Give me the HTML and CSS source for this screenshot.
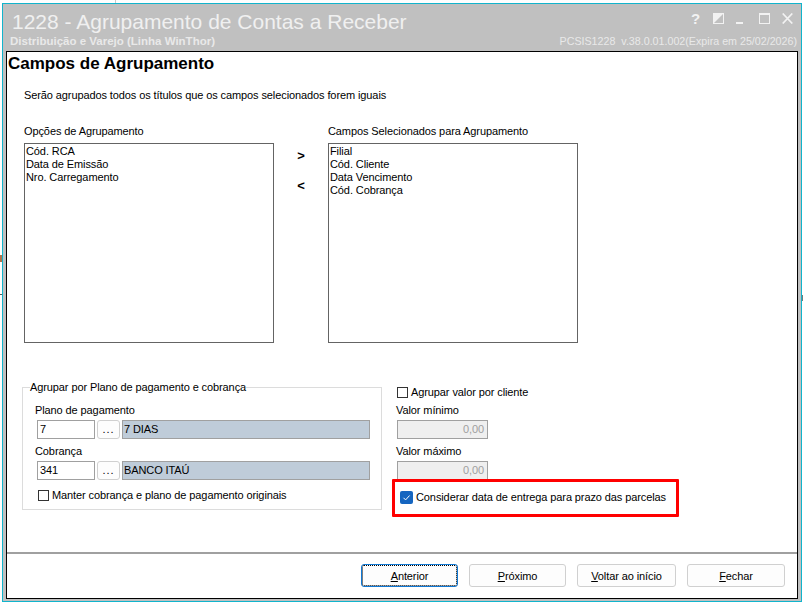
FILE: index.html
```html
<!DOCTYPE html>
<html lang="pt-BR">
<head>
<meta charset="utf-8">
<title>1228 - Agrupamento de Contas a Receber</title>
<link rel="stylesheet" href="styles.css">
</head>
<body>
<i class="speck speck-a"></i><i class="speck speck-b"></i><i class="speck speck-c"></i><i class="speck speck-d"></i>
<div class="window">
  <header class="titlebar">
    <div class="title-row">
      <div class="title">1228 - Agrupamento de Contas a Receber</div>
      <div class="win-icons">
        <span class="help">?</span>
        <svg class="ico ico-contrast" width="11" height="11" viewBox="0 0 11 11"><rect x="0.5" y="0.5" width="10" height="10" fill="none" stroke="#f2f2f2"/><path d="M1 10V1h9z" fill="#f2f2f2"/></svg>
        <svg class="ico ico-min" width="7" height="11" viewBox="0 0 7 11"><rect x="0" y="9" width="7" height="2" fill="#f2f2f2"/></svg>
        <svg class="ico ico-max" width="11" height="11" viewBox="0 0 11 11"><rect x="0.5" y="0.5" width="10" height="10" fill="none" stroke="#f2f2f2"/><rect x="0" y="0" width="11" height="2" fill="#f2f2f2"/></svg>
        <svg class="ico" width="11" height="11" viewBox="0 0 11 11"><path d="M0.7 0.5l9.6 10M10.3 0.5L0.7 10.5" stroke="#f2f2f2" stroke-width="1.7" fill="none"/></svg>
      </div>
    </div>
    <div class="sub-row">
      <span class="sub-left">Distribuição e Varejo (Linha WinThor)</span>
      <span class="sub-right">PCSIS1228&nbsp; v.38.0.01.002(Expira em 25/02/2026)</span>
    </div>
  </header>
  <main class="panel">
    <section class="body">
      <h1 class="heading">Campos de Agrupamento</h1>
      <p class="intro">Serão agrupados todos os títulos que os campos selecionados forem iguais</p>
      <div class="lists">
        <div class="list-col">
          <label class="lbl">Opções de Agrupamento</label>
          <ul class="listbox"><li>Cód. RCA</li><li>Data de Emissão</li><li>Nro. Carregamento</li></ul>
        </div>
        <div class="arrows"><span>&gt;</span><span>&lt;</span></div>
        <div class="list-col">
          <label class="lbl">Campos Selecionados para Agrupamento</label>
          <ul class="listbox"><li>Filial</li><li>Cód. Cliente</li><li>Data Vencimento</li><li>Cód. Cobrança</li></ul>
        </div>
      </div>
      <div class="lower">
        <fieldset class="group">
          <legend>Agrupar por Plano de pagamento e cobrança</legend>
          <div class="lbl field-lbl">Plano de pagamento</div>
          <div class="lookup"><span class="input code">7</span><span class="dots">...</span><span class="input desc">7 DIAS</span></div>
          <div class="lbl field-lbl">Cobrança</div>
          <div class="lookup"><span class="input code">341</span><span class="dots">...</span><span class="input desc">BANCO ITAÚ</span></div>
          <div class="check group-check"><span class="box"></span><span>Manter cobrança e plano de pagamento originais</span></div>
        </fieldset>
        <div class="values">
          <div class="check top-check"><span class="box"></span><span>Agrupar valor por cliente</span></div>
          <div class="lbl field-lbl val-first">Valor mínimo</div>
          <div class="input num">0,00</div>
          <div class="lbl field-lbl">Valor máximo</div>
          <div class="input num">0,00</div>
          <div class="check delivery">
            <span class="box on"><svg width="13" height="13" viewBox="0 0 13 13"><path d="M3.5 6.8l2.1 2.1 4-4.4" fill="none" stroke="#fff" stroke-width="1"/></svg></span>
            <span>Considerar data de entrega para prazo das parcelas</span>
          </div>
          <div class="highlight"></div>
        </div>
      </div>
    </section>
    <footer class="footer">
      <button class="btn active"><u>A</u>nterior</button>
      <button class="btn"><u>P</u>róximo</button>
      <button class="btn w99"><u>V</u>oltar ao início</button>
      <button class="btn w98"><u>F</u>echar</button>
    </footer>
  </main>
</div>
</body>
</html>
```
FILE: styles.css
```css
* { box-sizing: border-box; }
html, body { margin: 0; padding: 0; height: 100%; background: #fff; overflow: hidden; }
body { padding: 3px 1px 2px 2px; font-family: "Liberation Sans", sans-serif; font-size: 11px; letter-spacing: -0.1px; color: #000; }

.speck { position: absolute; display: block; }
.speck-a { left: 115px; top: 0; width: 1px; height: 3px; background: #c8c8c8; }
.speck-b { left: 0; top: 255px; width: 2px; height: 7px; background: #b0714a; }
.speck-c { left: 0; top: 294px; width: 2px; height: 1px; background: #555; }
.speck-d { left: 802px; top: 295px; width: 1px; height: 6px; background: #777; }

.window { height: 100%; display: flex; flex-direction: column; background: #c0c0c0; border: 1px solid #11b4cc; padding: 0 3px 2px 3px; }

.titlebar { height: 47px; flex: none; color: #f2f2f2; letter-spacing: 0; }
.title-row { display: flex; justify-content: space-between; height: 30px; padding-top: 6px; }
.title { font: 21px/24px "Liberation Sans", sans-serif; padding-left: 6px; color: #f0f0f0; white-space: nowrap; }
.win-icons { display: flex; align-items: flex-start; padding: 3px 5px 0 0; }
.help { font: bold 15px/11px "Liberation Sans", sans-serif; width: 22px; }
.ico { display: block; }
.ico-contrast { margin-right: 12px; }
.ico-min { margin-right: 16px; }
.ico-max { margin-right: 12px; }
.sub-row { display: flex; justify-content: space-between; font-size: 11px; line-height: 13px; margin-top: 1px; padding-left: 4px; padding-right: 1px; }
.sub-left { font-weight: bold; font-size: 11.5px; color: #e9e9e9; }
.sub-right { color: #e9e9e9; font-size: 10.7px; }

.panel { flex: 1; display: flex; flex-direction: column; background: #fff; border: 1px solid #000; min-height: 0; }
.body { flex: 1; padding-left: 1px; }
.heading { margin: 0; font: bold 17px/20px "Liberation Sans", sans-serif; letter-spacing: 0; padding-top: 2px; height: 22px; }
.intro { margin: 15px 0 0 16px; line-height: 13px; }
.lbl { line-height: 13px; display: block; }

.lists { display: flex; margin: 23px 0 0 16px; }
.list-col { width: 250px; }
.list-col .lbl { margin-bottom: 5px; }
.listbox { list-style: none; margin: 0; padding: 1px 0 0 1px; height: 200px; border: 1px solid #646464; line-height: 13px; }
.arrows { width: 54px; display: flex; flex-direction: column; align-items: center; padding-top: 23px; gap: 15px; font: bold 13px/15px "Liberation Sans", sans-serif; }

.lower { display: flex; margin-top: 38px; margin-left: 14px; position: relative; }
.group { margin: 0; width: 360px; height: 129px; border: 1px solid #dcdcdc; padding: 0 0 0 12px; position: relative; }
.group legend { padding: 0; margin-left: -5px; line-height: 13px; }
.field-lbl { margin: 6px 0 3px; }
.group .field-lbl:first-of-type { margin-top: 10px; }
.lookup { display: flex; gap: 2px; padding-left: 2px; height: 19px; }
.input { display: block; border: 1px solid #a0a0a0; line-height: 17px; padding: 0 2px; height: 19px; }
.code { width: 58px; background: #fff; }
.desc { width: 248px; background: #bfccd9; padding-left: 1px; }
.dots { width: 23px; height: 19px; border: 1px solid #d0d0d0; border-radius: 3px; text-align: center; line-height: 17px; letter-spacing: 1px; background: #fdfdfd; }
.check { display: flex; align-items: center; gap: 3px; line-height: 13px; white-space: nowrap; }
.group-check { margin: 9px 0 0 3px; }
.box { width: 11px; height: 11px; border: 1px solid #333; flex: none; background: #fff; }

.values { margin-left: 15px; width: 300px; position: relative; }
.top-check { margin-top: 5px; }
.values .field-lbl { margin-left: -1px; }
.values .val-first { margin-top: 5px; }
.num { width: 91px; background: #efefef; color: #a0a0a0; text-align: right; padding-right: 3px; }
.delivery { margin: 11px 0 0 3px; }
.box.on { width: 13px; height: 13px; border: 0; border-radius: 2px; background: #1565c0; display: block; }
.box.on svg { display: block; }
.highlight { position: absolute; left: -5px; top: 98px; width: 287px; height: 38px; border: 3px solid #f00; border-radius: 1px; }

.footer { height: 46px; flex: none; border-top: 2px solid #a0a0a0; display: flex; gap: 11px; padding: 10px 0 0 354px; }
.btn { width: 97px; height: 23px; padding: 0; border: 1px solid #d0d0d0; border-radius: 3px; background: #fdfdfd; font: inherit; letter-spacing: inherit; color: #000; }
.w99 { width: 99px; }
.w98 { width: 98px; }
.btn.active { border-color: #0f78d4; outline: 1px dotted #000; outline-offset: -2px; }
```
